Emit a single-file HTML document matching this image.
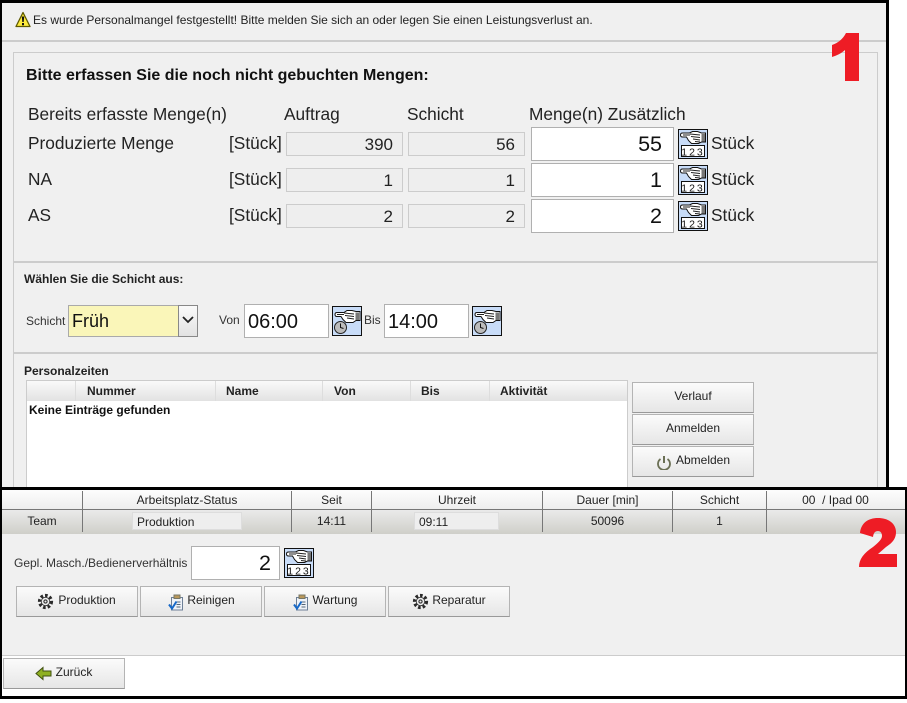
<!DOCTYPE html>
<html><head><meta charset="utf-8"><style>
html,body{margin:0;padding:0;background:#fff}
#r{position:relative;width:907px;height:703px;overflow:hidden;background:#fff;font-family:"Liberation Sans",sans-serif;color:#111}
#r div,#r svg{position:absolute;box-sizing:border-box}
.t{white-space:nowrap}
.l{font-size:17.3px;line-height:20px;color:#222}
.ro{background:#eee;border:1px solid #ccc;height:24px;text-align:right;font-size:17px;line-height:24px;padding-right:9px;color:#222}
.in{background:#fff;border:1px solid #b0b0b0;height:34px;text-align:right;font-size:21.5px;line-height:32px;padding-right:11px;color:#111}
.btn{background:linear-gradient(#fbfbfb,#e6e6e6);border:1px solid #b4b4b4;border-bottom-color:#999;font-size:12px;text-align:center;color:#222;height:31px;line-height:27px}
.hc{font-size:12px;font-weight:bold;line-height:18px;color:#222}
.sep{background:#ccc;height:2px}
.vs{background:#777;width:1px}
.s2{font-size:12px;text-align:center;color:#222;line-height:16px}
</style></head><body><div id="r">

<!-- panel 1 -->
<div style="left:0;top:0;width:889px;height:490px;background:#f0f0f0"></div>
<div class="t" style="left:33px;top:12px;font-size:12px;line-height:16px;color:#222">Es wurde Personalmangel festgestellt! Bitte melden Sie sich an oder legen Sie einen Leistungsverlust an.</div>
<svg style="left:15px;top:11px" width="16" height="17" viewBox="0 0 16 17"><path d="M8 1.500 L15 15.500 H1Z" fill="#ffec3d" stroke="#5f5a00" stroke-width="1.300" stroke-linejoin="round"/><path d="M6.800 5.500h2.400l-.5 5.500H7.300z M7 12h2v2.200H7z" fill="#111"/></svg>
<div class="sep" style="left:2px;top:40px;width:884px"></div>

<div style="left:13px;top:52px;width:865px;height:440px;border:1px solid #ccc;border-bottom:0"></div>
<div class="t" style="left:26px;top:66px;font-size:16px;font-weight:bold;line-height:20px;color:#111">Bitte erfassen Sie die noch nicht gebuchten Mengen:</div>

<div class="t l" style="left:28px;top:104px">Bereits erfasste Menge(n)</div>
<div class="t l" style="left:284px;top:104px">Auftrag</div>
<div class="t l" style="left:407px;top:104px">Schicht</div>
<div class="t l" style="left:529px;top:104px">Menge(n) Zusätzlich</div>

<div class="t l" style="left:28px;top:133px">Produzierte Menge</div>
<div class="t l" style="left:229px;top:133px">[Stück]</div>
<div class="ro" style="left:286px;top:132px;width:117px">390</div>
<div class="ro" style="left:408px;top:132px;width:117px">56</div>
<div class="in" style="left:531px;top:127px;width:143px">55</div>
<svg style="left:678px;top:129px" width="30" height="30" viewBox="0 0 30 30"><rect x=".5" y=".5" width="29" height="29" fill="#c8dcf8" stroke="#111"/><path d="M2.500 6q0-2 2-2h7l3-1.500h5l4 1.500h4v9h-4l-3 1.500h-7l-3-3-2-3.500H4.500q-2 0-2-2z" fill="#fff" stroke="#111"/><path d="M5 6h7M12 5l10 1M13 7.500l9 1M15 10l7 1M17 12.500l5 .5" stroke="#222" stroke-width=".9"/><rect x="23.500" y="5" width="3.500" height="7.500" fill="#777"/><rect x="3.500" y="16.500" width="23" height="11" fill="#fff" stroke="#111"/><text x="15" y="26.300" font-size="10.500" text-anchor="middle" letter-spacing="2" fill="#111" font-family="Liberation Sans">123</text></svg>
<div class="t l" style="left:711px;top:133px">Stück</div>

<div class="t l" style="left:28px;top:169px">NA</div>
<div class="t l" style="left:229px;top:169px">[Stück]</div>
<div class="ro" style="left:286px;top:168px;width:117px">1</div>
<div class="ro" style="left:408px;top:168px;width:117px">1</div>
<div class="in" style="left:531px;top:163px;width:143px">1</div>
<svg style="left:678px;top:165px" width="30" height="30" viewBox="0 0 30 30"><rect x=".5" y=".5" width="29" height="29" fill="#c8dcf8" stroke="#111"/><path d="M2.500 6q0-2 2-2h7l3-1.500h5l4 1.500h4v9h-4l-3 1.500h-7l-3-3-2-3.500H4.500q-2 0-2-2z" fill="#fff" stroke="#111"/><path d="M5 6h7M12 5l10 1M13 7.500l9 1M15 10l7 1M17 12.500l5 .5" stroke="#222" stroke-width=".9"/><rect x="23.500" y="5" width="3.500" height="7.500" fill="#777"/><rect x="3.500" y="16.500" width="23" height="11" fill="#fff" stroke="#111"/><text x="15" y="26.300" font-size="10.500" text-anchor="middle" letter-spacing="2" fill="#111" font-family="Liberation Sans">123</text></svg>
<div class="t l" style="left:711px;top:169px">Stück</div>

<div class="t l" style="left:28px;top:205px">AS</div>
<div class="t l" style="left:229px;top:205px">[Stück]</div>
<div class="ro" style="left:286px;top:204px;width:117px">2</div>
<div class="ro" style="left:408px;top:204px;width:117px">2</div>
<div class="in" style="left:531px;top:199px;width:143px">2</div>
<svg style="left:678px;top:201px" width="30" height="30" viewBox="0 0 30 30"><rect x=".5" y=".5" width="29" height="29" fill="#c8dcf8" stroke="#111"/><path d="M2.500 6q0-2 2-2h7l3-1.500h5l4 1.500h4v9h-4l-3 1.500h-7l-3-3-2-3.500H4.500q-2 0-2-2z" fill="#fff" stroke="#111"/><path d="M5 6h7M12 5l10 1M13 7.500l9 1M15 10l7 1M17 12.500l5 .5" stroke="#222" stroke-width=".9"/><rect x="23.500" y="5" width="3.500" height="7.500" fill="#777"/><rect x="3.500" y="16.500" width="23" height="11" fill="#fff" stroke="#111"/><text x="15" y="26.300" font-size="10.500" text-anchor="middle" letter-spacing="2" fill="#111" font-family="Liberation Sans">123</text></svg>
<div class="t l" style="left:711px;top:205px">Stück</div>

<div class="sep" style="left:14px;top:261px;width:863px"></div>
<div class="t" style="left:24px;top:271px;font-size:12px;font-weight:bold;line-height:16px;color:#222">Wählen Sie die Schicht aus:</div>
<div class="t" style="left:26px;top:313px;font-size:12px;line-height:16px;color:#333">Schicht</div>
<div style="left:68px;top:305px;width:130px;height:32px;background:#faf6b9;border:1px solid #aaa;font-size:18px;line-height:30px;padding-left:3px;color:#111">Früh</div>
<div style="left:178px;top:305px;width:20px;height:32px;background:linear-gradient(#fafafa,#e2e2e2);border:1px solid #888"></div>
<svg style="left:181px;top:315px" width="14" height="10" viewBox="0 0 14 10"><path d="M2 2l5 5 5-5" fill="none" stroke="#222" stroke-width="1.800"/></svg>
<div class="t" style="left:219px;top:312px;font-size:12px;line-height:16px;color:#333">Von</div>
<div class="in" style="left:244px;top:304px;width:85px;text-align:left;padding-left:3px;font-size:20px;line-height:35px">06:00</div>
<svg style="left:332px;top:306px" width="30" height="30" viewBox="0 0 30 30"><rect x=".5" y=".5" width="29" height="29" fill="#c8dcf8" stroke="#111"/><path d="M3 8.500q0-2 2-2h7l3-2h5l4 1h4v9h-4l-3 2h-7l-3-3-2-3H5q-2 0-2-2z" fill="#fff" stroke="#111"/><path d="M5 8.500h7M12 7l10 1M13 9.500l9 1M15 12l7 1" stroke="#222" stroke-width=".9"/><rect x="23.500" y="6.500" width="3.500" height="7.500" fill="#777"/><circle cx="8.500" cy="21.500" r="6" fill="#bbb" stroke="#222"/><path d="M8.500 17.500v4l3 1" fill="none" stroke="#111"/></svg>
<div class="t" style="left:364px;top:312px;font-size:12px;line-height:16px;color:#333">Bis</div>
<div class="in" style="left:384px;top:304px;width:85px;text-align:left;padding-left:3px;font-size:20px;line-height:35px">14:00</div>
<svg style="left:472px;top:306px" width="30" height="30" viewBox="0 0 30 30"><rect x=".5" y=".5" width="29" height="29" fill="#c8dcf8" stroke="#111"/><path d="M3 8.500q0-2 2-2h7l3-2h5l4 1h4v9h-4l-3 2h-7l-3-3-2-3H5q-2 0-2-2z" fill="#fff" stroke="#111"/><path d="M5 8.500h7M12 7l10 1M13 9.500l9 1M15 12l7 1" stroke="#222" stroke-width=".9"/><rect x="23.500" y="6.500" width="3.500" height="7.500" fill="#777"/><circle cx="8.500" cy="21.500" r="6" fill="#bbb" stroke="#222"/><path d="M8.500 17.500v4l3 1" fill="none" stroke="#111"/></svg>

<div class="sep" style="left:14px;top:352px;width:863px"></div>
<div class="t" style="left:24px;top:363px;font-size:12px;font-weight:bold;line-height:16px;color:#222">Personalzeiten</div>
<div style="left:26px;top:380px;width:602px;height:110px;background:#fff;border:1px solid #ccc;border-bottom:0"></div>
<div style="left:27px;top:381px;width:600px;height:20px;background:linear-gradient(#fafafa,#e2e2e2)"></div>
<div style="left:75px;top:381px;width:1px;height:20px;background:#ddd"></div>
<div style="left:215px;top:381px;width:1px;height:20px;background:#ddd"></div>
<div style="left:322px;top:381px;width:1px;height:20px;background:#ddd"></div>
<div style="left:410px;top:381px;width:1px;height:20px;background:#ddd"></div>
<div style="left:489px;top:381px;width:1px;height:20px;background:#ddd"></div>
<div class="t hc" style="left:87px;top:382px">Nummer</div>
<div class="t hc" style="left:226px;top:382px">Name</div>
<div class="t hc" style="left:334px;top:382px">Von</div>
<div class="t hc" style="left:421px;top:382px">Bis</div>
<div class="t hc" style="left:500px;top:382px">Aktivität</div>
<div class="t" style="left:29px;top:402px;font-size:12px;font-weight:bold;line-height:16px;color:#111">Keine Einträge gefunden</div>

<div class="btn" style="left:632px;top:382px;width:122px">Verlauf</div>
<div class="btn" style="left:632px;top:414px;width:122px">Anmelden</div>
<div class="btn" style="left:632px;top:446px;width:122px;padding-left:20px">Abmelden</div>
<svg style="left:656px;top:454px" width="16" height="16" viewBox="0 0 16 16"><path d="M8 2v7" stroke="#6b7055" stroke-width="2" fill="none"/><path d="M4.500 5a6 6 0 1 0 7 0" stroke="#6b7055" stroke-width="1.800" fill="none"/></svg>

<!-- borders panel 1 -->
<div style="left:0;top:0;width:889px;height:3px;background:#000"></div>
<div style="left:0;top:0;width:2px;height:490px;background:#000"></div>
<div style="left:886px;top:0;width:3px;height:490px;background:#000"></div>

<!-- numeral 1 -->
<svg style="left:832px;top:33px" width="27" height="48" viewBox="0 0 27 48"><path d="M14 0h13v48H13V17C9 20.500 5 22.500 0 24V12C6 10 11 6 14 0z" fill="#ee1c25"/></svg>

<!-- panel 2 -->
<div style="left:0;top:487px;width:907px;height:212px;background:#f0f0f0"></div>
<div style="left:2px;top:490px;width:903px;height:19px;background:linear-gradient(#fdfdfd,#eee)"></div>
<div style="left:2px;top:509px;width:903px;height:1px;background:#777"></div>
<div style="left:2px;top:510px;width:903px;height:24px;background:linear-gradient(#eaeaea,#cfcfc9)"></div>
<div class="vs" style="left:82px;top:491px;height:41px"></div>
<div class="vs" style="left:291px;top:491px;height:41px"></div>
<div class="vs" style="left:371px;top:491px;height:41px"></div>
<div class="vs" style="left:542px;top:491px;height:41px"></div>
<div class="vs" style="left:672px;top:491px;height:41px"></div>
<div class="vs" style="left:766px;top:491px;height:41px"></div>

<div class="s2 t" style="left:83px;top:492px;width:208px">Arbeitsplatz-Status</div>
<div class="s2 t" style="left:292px;top:492px;width:79px">Seit</div>
<div class="s2 t" style="left:372px;top:492px;width:170px">Uhrzeit</div>
<div class="s2 t" style="left:543px;top:492px;width:129px">Dauer [min]</div>
<div class="s2 t" style="left:673px;top:492px;width:93px">Schicht</div>
<div class="s2 t" style="left:767px;top:492px;width:137px">00&nbsp; / Ipad 00</div>

<div class="s2 t" style="left:2px;top:513px;width:80px">Team</div>
<div class="t" style="left:132px;top:512px;width:110px;height:18px;background:#eee;border:1px solid #ddd;font-size:12px;line-height:18px;padding-left:4px;color:#222">Produktion</div>
<div class="s2 t" style="left:292px;top:513px;width:79px">14:11</div>
<div class="t" style="left:414px;top:512px;width:85px;height:18px;background:#eee;border:1px solid #ddd;font-size:12px;line-height:18px;padding-left:4px;color:#222">09:11</div>
<div class="s2 t" style="left:543px;top:513px;width:129px">50096</div>
<div class="s2 t" style="left:673px;top:513px;width:93px">1</div>

<div class="t" style="left:14px;top:555px;font-size:12px;line-height:16px;color:#333">Gepl. Masch./Bedienerverhältnis</div>
<div class="in" style="left:191px;top:546px;width:89px;padding-right:8px">2</div>
<svg style="left:284px;top:548px" width="30" height="30" viewBox="0 0 30 30"><rect x=".5" y=".5" width="29" height="29" fill="#c8dcf8" stroke="#111"/><path d="M2.500 6q0-2 2-2h7l3-1.500h5l4 1.500h4v9h-4l-3 1.500h-7l-3-3-2-3.500H4.500q-2 0-2-2z" fill="#fff" stroke="#111"/><path d="M5 6h7M12 5l10 1M13 7.500l9 1M15 10l7 1M17 12.500l5 .5" stroke="#222" stroke-width=".9"/><rect x="23.500" y="5" width="3.500" height="7.500" fill="#777"/><rect x="3.500" y="16.500" width="23" height="11" fill="#fff" stroke="#111"/><text x="15" y="26.300" font-size="10.500" text-anchor="middle" letter-spacing="2" fill="#111" font-family="Liberation Sans">123</text></svg>

<div class="btn" style="left:16px;top:586px;width:122px;padding-left:20px">Produktion</div>
<svg style="left:37px;top:593px" width="17" height="17" viewBox="0 0 17 17"><circle cx="8.500" cy="8.500" r="6" fill="none" stroke="#2a2a2a" stroke-width="3.200" stroke-dasharray="2.600 2"/><circle cx="8.500" cy="8.500" r="4.200" fill="#eee" stroke="#333" stroke-width=".8"/><circle cx="8.500" cy="8.500" r="1.600" fill="none" stroke="#333" stroke-width="1.100"/></svg>
<div class="btn" style="left:140px;top:586px;width:122px;padding-left:20px">Reinigen</div>
<svg style="left:168px;top:594px" width="16" height="17" viewBox="0 0 16 17"><rect x="3.500" y="3.500" width="11" height="12.500" fill="#eef2f8" stroke="#6d7f96"/><rect x="6" y="1" width="6" height="3.500" fill="#b8975a" stroke="#776"/><path d="M8.500 8h4M8.500 10.500h4M8.500 13h4" stroke="#567"/><path d="M1 10.500l3 4 4.500-7" fill="none" stroke="#1668c8" stroke-width="2"/></svg>
<div class="btn" style="left:264px;top:586px;width:122px;padding-left:20px">Wartung</div>
<svg style="left:293px;top:594px" width="16" height="17" viewBox="0 0 16 17"><rect x="3.500" y="3.500" width="11" height="12.500" fill="#eef2f8" stroke="#6d7f96"/><rect x="6" y="1" width="6" height="3.500" fill="#b8975a" stroke="#776"/><path d="M8.500 8h4M8.500 10.500h4M8.500 13h4" stroke="#567"/><path d="M1 10.500l3 4 4.500-7" fill="none" stroke="#1668c8" stroke-width="2"/></svg>
<div class="btn" style="left:388px;top:586px;width:122px;padding-left:20px">Reparatur</div>
<svg style="left:412px;top:593px" width="17" height="17" viewBox="0 0 17 17"><circle cx="8.500" cy="8.500" r="6" fill="none" stroke="#2a2a2a" stroke-width="3.200" stroke-dasharray="2.600 2"/><circle cx="8.500" cy="8.500" r="4.200" fill="#eee" stroke="#333" stroke-width=".8"/><circle cx="8.500" cy="8.500" r="1.600" fill="none" stroke="#333" stroke-width="1.100"/></svg>

<div style="left:2px;top:655px;width:903px;height:41px;background:#fff;border-top:1px solid #ccc"></div>
<div class="btn" style="left:3px;top:658px;width:122px;padding-left:20px">Zurück</div>
<svg style="left:35px;top:666px" width="17" height="15" viewBox="0 0 17 15"><path d="M1 7.500L8 1.500v3.500h8v5H8v3.500z" fill="#8fb021" stroke="#3f4f10"/></svg>

<!-- borders panel 2 -->
<div style="left:0;top:487px;width:907px;height:3px;background:#000"></div>
<div style="left:0;top:696px;width:907px;height:3px;background:#000"></div>
<div style="left:0;top:487px;width:2px;height:212px;background:#000"></div>
<div style="left:905px;top:487px;width:2px;height:212px;background:#000"></div>

<!-- numeral 2 -->
<svg style="left:859px;top:518px" width="38" height="49" viewBox="0 0 38 49"><path d="M1 15C2 5 9 0 19 0c11 0 18 6 18 14 0 7-4 11-10 15l-8 7h19v13H0c0-8 5-14 14-20 6-5 9-8 9-11 0-3-1.500-5-4-5-3 0-4.500 2-5 6z" fill="#ee1c25"/></svg>

</div></body></html>
